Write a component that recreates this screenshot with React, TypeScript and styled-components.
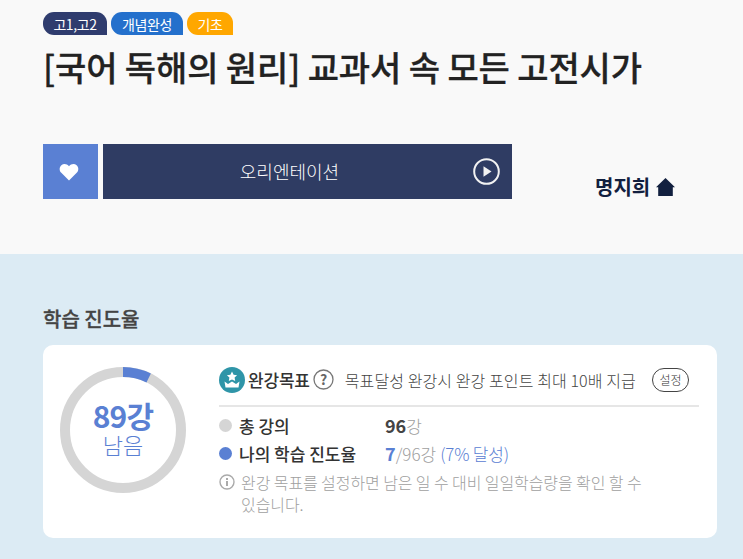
import React from "react";
import styled, { createGlobalStyle } from "styled-components";

const Global = createGlobalStyle`
  html, body { margin: 0; padding: 0; background: #dcebf4; }
  body { font-family: "Noto Sans CJK KR", "Noto Sans", sans-serif; width: 743px; height: 559px; overflow: hidden; }
  * { box-sizing: border-box; }
`;

const Page = styled.div`display: flex; flex-direction: column; width: 743px; height: 559px;`;
const Top = styled.header`height: 254px; background: #f9f9f9; padding: 12px 0 0 43px;`;
const Tags = styled.div`display: flex; gap: 4px; height: 23px;`;
const Tag = styled.span<{ $bg: string; $w: number }>`
  display: flex; align-items: center; justify-content: center; width: ${p => p.$w}px; height: 23px;
  background: ${p => p.$bg}; color: #fff; font-size: 14px; letter-spacing: -0.4px;
  border-radius: 11px 11px 0 11px;
`;
const Title = styled.h1`
  margin: 6px 0 0; font-size: 34px; line-height: 52px; height: 52px; font-weight: 500; color: #222; white-space: nowrap; letter-spacing: -0.12px;
  -webkit-text-stroke: 0.3px #222;
`;
const Actions = styled.div`display: flex; margin-top: 51px; height: 55px;`;
const HeartButton = styled.div`
  width: 55px; height: 55px; background: #5a80d3; display: flex; align-items: center; justify-content: center; padding-right: 3px;
`;
const PlayButton = styled.div`
  position: relative; width: 409px; height: 55px; margin-left: 5px; background: #2f3c63; color: #fff;
  display: flex; align-items: center; justify-content: center; font-size: 18px; font-weight: 300; padding: 0 36px 2px 0;
`;
const PlayIcon = styled.svg`position: absolute; right: 12px; top: 14px;`;
const Author = styled.div`
  display: flex; align-items: center; gap: 6px; margin: 15px 0 0 83px; height: 55px; font-size: 20px; font-weight: 700; color: #12203f; white-space: nowrap;
`;
const Bottom = styled.section`flex: 1; background: #dcebf4; padding: 50px 26px 0 43px;`;
const SectionTitle = styled.h2`
  margin: 0; height: 30px; line-height: 30px; font-size: 20px; font-weight: 500; color: #444; -webkit-text-stroke: 0.3px #444;
`;
const Card = styled.div`
  display: flex; margin-top: 11px; height: 193px; background: #fff; border-radius: 10px; padding: 22px 17px 0 17px;
`;
const Ring = styled.div`position: relative; width: 126px; height: 126px; flex: none;`;
const RingText = styled.div`
  position: absolute; inset: 0; display: flex; flex-direction: column; align-items: center; justify-content: center; color: #5a80d3;
`;
const RingNum = styled.div`font-size: 30px; font-weight: 700; line-height: 30px; letter-spacing: -0.8px; margin-top: -2px;`;
const RingSub = styled.div`font-size: 22px; font-weight: 300; line-height: 28px;`;
const Info = styled.div`flex: 1; margin-left: 33px; margin-right: 1px; min-width: 0;`;
const GoalRow = styled.div`
  display: flex; align-items: center; height: 27px; margin-top: -1px; white-space: nowrap;
`;
const GoalLabel = styled.b`font-size: 17px; font-weight: 500; color: #333; margin-left: 3px; letter-spacing: -0.2px;`;
const Help = styled.svg`margin-left: 3px; flex: none;`;
const GoalDesc = styled.span`font-size: 16px; font-weight: 300; color: #444; margin-left: 11px; letter-spacing: 0.1px;`;
const SetBtn = styled.span`
  margin-left: auto; margin-right: 10px; width: 37px; height: 24px; border: 1px solid #444; border-radius: 12px;
  display: flex; align-items: center; justify-content: center; font-size: 12px; font-weight: 300; color: #333;
`;
const Divider = styled.hr`margin: 12px 0 0; border: 0; height: 2px; background: #e6e6e6;`;
const StatRow = styled.div`display: flex; align-items: center; height: 28px; white-space: nowrap; font-size: 17px;`;
const Stats = styled.div`margin-top: 4px;`;
const Dot = styled.i<{ $c: string }>`width: 13px; height: 13px; border-radius: 50%; background: ${p => p.$c}; flex: none;`;
const StatLabel = styled.span`width: 146px; margin-left: 7px; font-weight: 500; font-size: 17px; color: #333;`;
const Strong = styled.b<{ $c: string }>`font-weight: 700; font-size: 18px; color: ${p => p.$c};`;
const Muted = styled.span`color: #a0a0a0; font-weight: 300;`;
const Pct = styled.span`color: #5a80d3; font-weight: 300; margin-left: 4px; letter-spacing: -0.2px;`;
const Note = styled.div`display: flex; margin-top: 4px; color: #a0a0a0; font-size: 16px; font-weight: 300; line-height: 22px; letter-spacing: -0.08px;`;
const NoteIcon = styled.svg`flex: none; margin-top: 3px; margin-right: 6px;`;
const NoteText = styled.div`width: 405px;`;

export default function App() {
  return (
    <Page>
      <Global />
      <Top>
        <Tags>
          <Tag $bg="#2f3c6e" $w={64}>고1,고2</Tag>
          <Tag $bg="#2470cc" $w={72}>개념완성</Tag>
          <Tag $bg="#ffa700" $w={46}>기초</Tag>
        </Tags>
        <Title>[국어 독해의 원리] 교과서 속 모든 고전시가</Title>
        <Actions>
          <HeartButton>
            <svg width="20" height="18" viewBox="0 0 24 22"><path fill="#fff" d="M12 21.5 2.6 12C-.2 9.1.1 5 2.7 2.7 5.4.4 9.6.9 12 4c2.4-3.1 6.6-3.6 9.3-1.3 2.6 2.3 2.9 6.4.1 9.3z" /></svg>
          </HeartButton>
          <PlayButton>
            오리엔테이션
            <PlayIcon width="27" height="27" viewBox="0 0 27 27">
              <circle cx="13.5" cy="13.5" r="12.3" fill="none" stroke="#f2f2f2" strokeWidth="2" />
              <path fill="#f2f2f2" d="M10.5 8.2 18.5 13.5 10.5 18.8z" />
            </PlayIcon>
          </PlayButton>
          <Author>
            명지희
            <svg width="19" height="18" viewBox="0 0 19 18"><path fill="#12203f" d="M9.5 0 19 9.2h-2.2V18H2.2V9.2H0z" /></svg>
          </Author>
        </Actions>
      </Top>
      <Bottom>
        <SectionTitle>학습 진도율</SectionTitle>
        <Card>
          <Ring>
            <svg width="126" height="126" viewBox="0 0 126 126">
              <circle cx="63" cy="63" r="58" fill="none" stroke="#d5d5d5" strokeWidth="10" />
              <circle cx="63" cy="63" r="58" fill="none" stroke="#5a80d3" strokeWidth="10" strokeDasharray="26.6 337.8" transform="rotate(-90 63 63)" />
            </svg>
            <RingText>
              <RingNum>89강</RingNum>
              <RingSub>남음</RingSub>
            </RingText>
          </Ring>
          <Info>
            <GoalRow>
              <svg width="26" height="26" viewBox="0 0 26 26">
                <circle cx="13" cy="13" r="13" fill="#2f95a8" />
                <path fill="#fff" d="m13 4.5 1.6 3.2 3.5.5-2.5 2.4.6 3.4-3.2-1.6-3.2 1.6.6-3.4-2.5-2.4 3.5-.5z" />
                <path fill="#fff" d="M5.5 14.5 9 17l4-2.5 4 2.5 3.5-2.5-1 6h-13z" />
              </svg>
              <GoalLabel>완강목표</GoalLabel>
              <Help width="21" height="21" viewBox="0 0 21 21">
                <circle cx="10.5" cy="10.5" r="9.5" fill="none" stroke="#777" strokeWidth="1.3" />
                <text x="10.5" y="15.5" textAnchor="middle" fontSize="14" fontWeight="700" fill="#666" fontFamily="Noto Sans CJK KR, sans-serif">?</text>
              </Help>
              <GoalDesc>목표달성 완강시 완강 포인트 최대 10배 지급</GoalDesc>
              <SetBtn>설정</SetBtn>
            </GoalRow>
            <Divider />
            <Stats>
              <StatRow>
                <Dot $c="#d5d5d5" />
                <StatLabel>총 강의</StatLabel>
                <Strong $c="#444">96</Strong><Muted>강</Muted>
              </StatRow>
              <StatRow>
                <Dot $c="#5a80d3" />
                <StatLabel>나의 학습 진도율</StatLabel>
                <Strong $c="#5a80d3">7</Strong><Muted>/96강</Muted><Pct>(7% 달성)</Pct>
              </StatRow>
            </Stats>
            <Note>
              <NoteIcon width="16" height="16" viewBox="0 0 16 16">
                <circle cx="8" cy="8" r="7" fill="none" stroke="#aaa" strokeWidth="1.4" />
                <rect x="7" y="7" width="2" height="5" fill="#aaa" />
                <rect x="7" y="4" width="2" height="2" fill="#aaa" />
              </NoteIcon>
              <NoteText>완강 목표를 설정하면 남은 일 수 대비 일일학습량을 확인 할 수 있습니다.</NoteText>
            </Note>
          </Info>
        </Card>
      </Bottom>
    </Page>
  );
}
